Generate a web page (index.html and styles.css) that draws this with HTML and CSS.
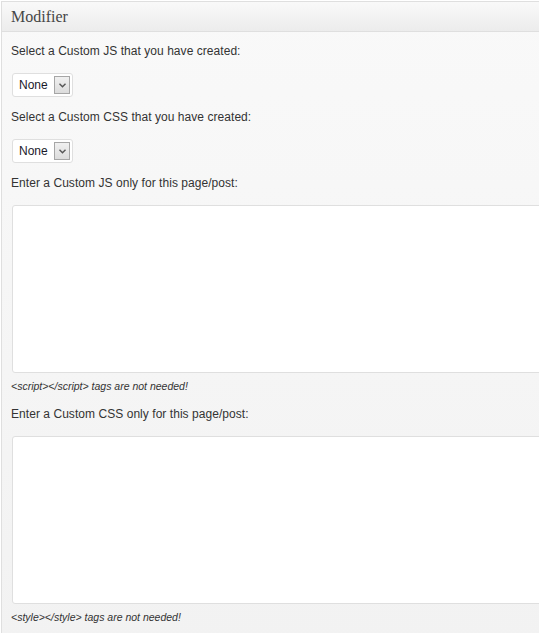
FILE: index.html
```html
<!DOCTYPE html>
<html>
<head>
<meta charset="utf-8">
<link rel="stylesheet" href="styles.css">
</head>
<body>
<div class="page">
  <div class="postbox">
    <h3 class="hndle">Modifier</h3>
    <div class="inside">
      <p class="label">Select a Custom JS that you have created:</p>
      <div class="select">
        <span class="select-value">None</span>
        <span class="select-btn"><svg width="7" height="5" viewBox="0 0 7 5"><path d="M0.5 0.8 L3.5 3.8 L6.5 0.8" fill="none" stroke="#555" stroke-width="1.4"/></svg></span>
      </div>
      <p class="label">Select a Custom CSS that you have created:</p>
      <div class="select">
        <span class="select-value">None</span>
        <span class="select-btn"><svg width="7" height="5" viewBox="0 0 7 5"><path d="M0.5 0.8 L3.5 3.8 L6.5 0.8" fill="none" stroke="#555" stroke-width="1.4"/></svg></span>
      </div>
      <p class="label">Enter a Custom JS only for this page/post:</p>
      <textarea class="code"></textarea>
      <p class="note">&lt;script&gt;&lt;/script&gt; tags are not needed!</p>
      <p class="label">Enter a Custom CSS only for this page/post:</p>
      <textarea class="code"></textarea>
      <p class="note">&lt;style&gt;&lt;/style&gt; tags are not needed!</p>
    </div>
  </div>
</div>
</body>
</html>
```
FILE: styles.css
```css
html, body {
  margin: 0;
  padding: 0;
  background: #fff;
  overflow: hidden;
}
.page {
  padding: 1px 0 0 1px;
}
.postbox {
  border-top: 1px solid #dfdfdf;
  border-left: 1px solid #dfdfdf;
  background: linear-gradient(to bottom, #f9f9f9, #f2f2f2);
  min-height: 640px;
  overflow: hidden;
}
.hndle {
  margin: 0;
  height: 29px;
  border-bottom: 1px solid #dfdfdf;
  background: linear-gradient(to bottom, #f9f9f9, #ececec);
  font-family: "Liberation Serif", "DejaVu Serif", serif;
  font-weight: normal;
  font-size: 16px;
  line-height: 29px;
  color: #464646;
  padding-left: 9px;
}
.inside {
  display: flex;
  flex-direction: column;
  align-items: flex-start;
  padding: 12px 0 0 9px;
  font-family: "Liberation Sans", Arial, sans-serif;
}
.label {
  margin: 0 0 15px 0;
  font-size: 12px;
  line-height: 14px;
  color: #333;
  letter-spacing: 0.05px;
}
.select {
  display: flex;
  align-items: center;
  box-sizing: border-box;
  width: 61px;
  height: 24px;
  margin: 0 0 13px 1px;
  border: 1px solid #dfdfdf;
  border-radius: 3px;
  background: #fff;
  padding: 0 2px 0 6px;
  font-size: 12px;
  color: #1a1a2a;
}
.select-value {
  flex: 1;
  line-height: 14px;
}
.select-btn {
  display: flex;
  align-items: center;
  justify-content: center;
  box-sizing: border-box;
  width: 16px;
  height: 18px;
  border: 1px solid #a6a6a6;
  background: linear-gradient(to bottom, #f0f0f0, #dcdcdc);
}
.code {
  display: block;
  box-sizing: border-box;
  width: calc(100% + 40px);
  height: 168px;
  margin: 0 0 7px 1px;
  padding: 0;
  border: 1px solid #dfdfdf;
  border-radius: 3px;
  background: #fff;
  resize: none;
  outline: none;
}
.note {
  margin: 0 0 15px 0;
  font-size: 10.5px;
  line-height: 12px;
  font-style: italic;
  color: #333;
}
```
